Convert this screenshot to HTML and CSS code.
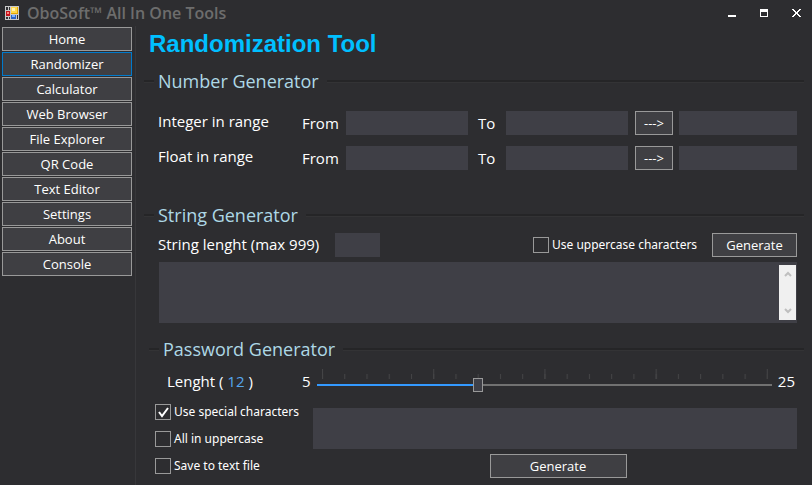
FILE: index.html
```html
<!DOCTYPE html>
<html lang="en">
<head>
<meta charset="utf-8">
<title>OboSoft™ All In One Tools</title>
<link rel="stylesheet" href="styles.css">
</head>
<body>
<header class="titlebar">
  <svg class="app-icon" viewBox="0 0 14 14" shape-rendering="crispEdges" aria-hidden="true">
    <path fill="#c9c9c9" d="M0 0h14v14H0z"/>
    <path fill="#303033" d="M1 1h2v3H1zM4 1h1v3H4zM1 11h2v2H1zM4 11h1v2H4z"/>
    <path fill="#c8141c" d="M1 5h4v5H1z"/>
    <path fill="#ff8a80" d="M2 6h2v2H2z"/>
    <path fill="#e5a800" d="M6 1h7v7H6z"/>
    <path fill="#ffd84a" d="M6 1h6v6H6z"/>
    <path fill="#fff3b0" d="M7 2h3v3H7z"/>
    <path fill="#2b63c6" d="M6 9h5v4H6z"/>
    <path fill="#7db4ff" d="M7 9h3v2H7z"/>
    <path fill="#303033" d="M12 9h1v4h-1z"/>
  </svg>
  <span class="app-name">OboSoft™ All In One Tools</span>
  <button class="win-btn" type="button" aria-label="Minimize"><svg viewBox="0 0 9 9" shape-rendering="crispEdges"><path fill="#fff" d="M0 6h8v2H0z"/></svg></button>
  <button class="win-btn" type="button" aria-label="Maximize"><svg viewBox="0 0 9 9" shape-rendering="crispEdges"><path fill="#fff" fill-rule="evenodd" d="M0 0h8v8H0zM1 3v4h6V3z"/></svg></button>
  <button class="win-btn" type="button" aria-label="Close"><svg viewBox="0 0 9 9" shape-rendering="crispEdges"><path fill="#fff" d="M0 0h2v1h1v1h1v1h1V2h1V1h1V0h2v1H8v1H7v1H6v2h1v1h1v1h1v1H7V7H6V6H5V5H4v1H3v1H2v1H0V7h1V6h1V5h1V3H2V2H1V1H0z"/></svg></button>
</header>
<div class="body">
  <nav class="sidebar">
    <button class="btn" type="button">Home</button>
    <button class="btn active" type="button">Randomizer</button>
    <button class="btn" type="button">Calculator</button>
    <button class="btn" type="button">Web Browser</button>
    <button class="btn" type="button">File Explorer</button>
    <button class="btn" type="button">QR Code</button>
    <button class="btn" type="button">Text Editor</button>
    <button class="btn" type="button">Settings</button>
    <button class="btn" type="button">About</button>
    <button class="btn" type="button">Console</button>
  </nav>
  <main class="main">
    <h1>Randomization Tool</h1>

    <section class="number">
      <h2>Number Generator</h2>
      <div class="range-row">
        <span class="row-label">Integer in range</span>
        <label for="int-from">From</label><input id="int-from" class="field" type="text">
        <label class="to" for="int-to">To</label><input id="int-to" class="field" type="text">
        <button class="btn" type="button">---&gt;</button>
        <input class="field" type="text" aria-label="Integer result" readonly>
      </div>
      <div class="range-row">
        <span class="row-label">Float in range</span>
        <label for="float-from">From</label><input id="float-from" class="field" type="text">
        <label class="to" for="float-to">To</label><input id="float-to" class="field" type="text">
        <button class="btn" type="button">---&gt;</button>
        <input class="field" type="text" aria-label="Float result" readonly>
      </div>
    </section>

    <section class="string">
      <h2>String Generator</h2>
      <div class="string-row">
        <label class="row-label" for="str-len">String lenght (max 999)</label>
        <input id="str-len" class="field short" type="text">
        <label class="check push"><input type="checkbox">Use uppercase characters</label>
        <button class="btn" type="button">Generate</button>
      </div>
      <div class="output">
        <textarea class="field" aria-label="Generated string" readonly></textarea>
        <div class="scrollbar" aria-hidden="true">
          <svg viewBox="0 0 8 6"><path d="M1 5l3-3 3 3"/></svg>
          <svg viewBox="0 0 8 6"><path d="M1 1l3 3 3-3"/></svg>
        </div>
      </div>
    </section>

    <section class="password">
      <h2>Password Generator</h2>
      <div class="length-row">
        <label for="pw-len">Lenght ( <output>12</output> )</label>
        <span class="min">5</span>
        <div class="slider">
          <svg class="ticks" aria-hidden="true">
            <defs>
              <pattern id="minor" width="5%" height="10" patternUnits="userSpaceOnUse"><path fill="#444446" d="M0 5h1v5H0z"/></pattern>
              <pattern id="major" width="25%" height="10" patternUnits="userSpaceOnUse"><path fill="#444446" d="M0 0h1v10H0z"/></pattern>
            </defs>
            <rect width="100%" height="10" fill="url(#minor)"/>
            <rect width="100%" height="10" fill="url(#major)"/>
            <rect x="100%" width="1" height="10" fill="#444446"/>
          </svg>
          <input id="pw-len" type="range" min="5" max="25" value="12">
        </div>
        <span>25</span>
      </div>
      <div class="password-grid">
        <div class="checks">
          <label class="check"><input type="checkbox" checked>Use special characters</label>
          <label class="check"><input type="checkbox">All in uppercase</label>
          <label class="check"><input type="checkbox">Save to text file</label>
        </div>
        <div class="result">
          <textarea class="field" aria-label="Generated password" readonly></textarea>
          <button class="btn" type="button">Generate</button>
        </div>
      </div>
    </section>
  </main>
</div>
</body>
</html>
```
FILE: styles.css
```css
* { box-sizing: border-box; }

body {
  margin: 0;
  min-height: 100vh;
  display: flex;
  flex-direction: column;
  background: #2d2d30;
  color: #fff;
  font: 15px/24px "Open Sans", "Noto Sans", sans-serif;
}

button, input, textarea { font: inherit; color: inherit; border-radius: 0; margin: 0; }

.titlebar { display: flex; align-items: center; height: 26px; padding: 0 8px 0 5px; }
.app-icon { width: 14px; height: 14px; margin-right: 8px; }
.app-name { flex: 1; font-size: 16px; font-weight: 600; color: #6d6d6d; }
.win-btn { width: 32px; height: 26px; padding: 0; border: 0; background: none; display: flex; align-items: center; justify-content: center; }
.win-btn:last-child { margin-right: -8px; }
.win-btn svg { width: 9px; height: 9px; }

.body { flex: 1; display: flex; }

.sidebar {
  flex: none;
  width: 136px;
  padding: 1px 3px 0 2px;
  border-right: 1px solid #37373a;
  display: flex;
  flex-direction: column;
  gap: 1px;
}

.btn {
  height: 24px;
  padding: 0;
  border: 1px solid #999;
  background: #3f3f43;
  font-size: 13px;
  line-height: 20px;
}
.btn.active { border-color: #007acc; }

.main { flex: 1; min-width: 0; padding: 0 8px 0 8px; }

h1 {
  margin: 0;
  padding: 4px 0 0 5px;
  font: bold 24px/28px "Liberation Sans", Arial, sans-serif;
  color: #00bfff;
}

h2 {
  margin: 0;
  height: 26px;
  display: flex;
  align-items: center;
  gap: 4px;
  font-size: 18px;
  font-weight: 400;
  line-height: 26px;
  color: #add8e6;
}
h2::before, h2::after { content: ""; height: 2px; background: #252527; border-bottom: 1px solid #333335; }
h2::before { width: 10px; }
h2::after { flex: 1; margin-left: 4px; }

.field { min-width: 0; width: 100%; height: 24px; padding: 2px 4px; border: 0; background: #3f3f46; outline: 0; resize: none; display: block; }

.row-label { line-height: 20px; padding-bottom: 3px; }

.number { padding-top: 10px; }
.number h2 { margin-bottom: 17px; }
.range-row {
  display: grid;
  grid-template-columns: 144px 44px 1fr 38px 1fr 7px 38px 6px 118px;
  margin: 0 7px 11px 14px;
}
.range-row .to { padding-left: 10px; }
.range-row .btn { grid-column: 7; }
.range-row .btn + .field { grid-column: 9; }

.string { padding-top: 21px; }
.string h2 { margin-bottom: 5px; }
.string-row { display: flex; align-items: center; margin: 0 7px 5px 14px; }
.string-row .row-label { width: 177px; }
.string-row .short { width: 45px; }
.string-row .push { width: 170px; margin-left: auto; }
.string-row .btn { width: 85px; margin-left: 9px; }

.output { position: relative; margin: 0 7px 0 15px; }
.output .field { height: 61px; }
.scrollbar {
  position: absolute;
  top: 3px;
  right: 1px;
  bottom: 3px;
  width: 17px;
  padding: 6px 4px;
  background: #f0f0f0;
  display: flex;
  flex-direction: column;
  align-items: center;
  justify-content: space-between;
}
.scrollbar svg { width: 8px; height: 6px; fill: none; stroke: #bfbfbf; stroke-width: 2; }

.check { display: flex; align-items: center; gap: 3px; font: 12px/16px "Noto Sans", "Open Sans", sans-serif; }
.check input {
  appearance: none;
  width: 16px;
  height: 16px;
  border: 1px solid #999;
  background: #2d2d30;
}
.check input:checked {
  background: #2d2d30 url('data:image/svg+xml,<svg xmlns="http://www.w3.org/2000/svg" viewBox="0 0 14 14"><path d="M3 7l3 4 6-8" fill="none" stroke="white" stroke-width="2"/></svg>');
}

.password { padding: 13px 0 0 5px; }
.length-row { display: flex; margin: 7px 9px 0 18px; }
.length-row label { width: 135px; }
.length-row output { color: #56a8f0; }
.length-row .min { width: 15px; }

.slider { position: relative; flex: 1; height: 24px; margin-right: 6px; }
.ticks { position: absolute; top: 0; left: 5px; width: calc(100% - 10px); height: 10px; overflow: visible; }
.slider input {
  appearance: none;
  position: relative;
  display: block;
  width: 100%;
  height: 14px;
  top: 9px;
  background: linear-gradient(90deg, #3399ff 35%, #717171 35%) 0 6px / 100% 2px no-repeat;
}
.slider input::-webkit-slider-thumb {
  appearance: none;
  width: 10px;
  height: 14px;
  border: 1px solid #999;
  background: #3f3f46;
}

.password-grid { display: grid; grid-template-columns: 158px 1fr; margin: 11px 7px 0 6px; }
.checks { display: flex; flex-direction: column; gap: 11px; }
.result { padding-top: 4px; display: flex; flex-direction: column; align-items: center; gap: 5px; }
.result .field { height: 41px; }
.result .btn { width: 137px; margin-left: 6px; }
```
